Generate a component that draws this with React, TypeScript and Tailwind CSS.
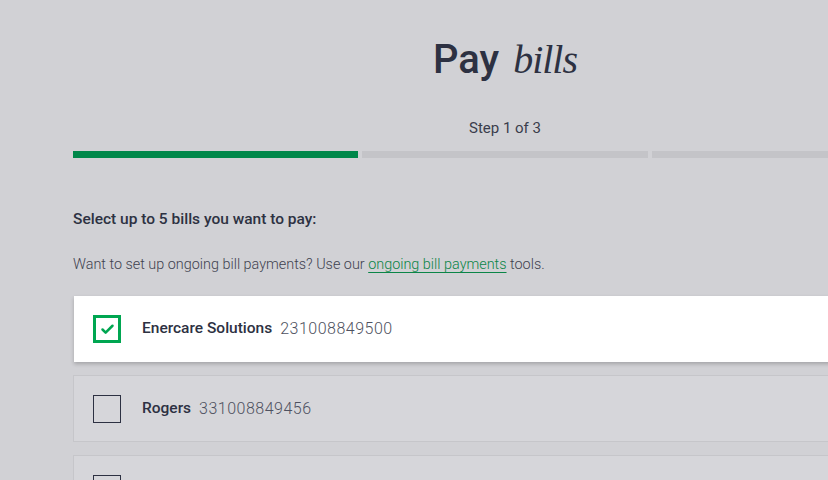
import { Check } from 'lucide-react'

interface Bill {
  name: string
  number: string
  checked?: boolean
}

const bills: Bill[] = [
  { name: 'Enercare Solutions', number: '231008849500', checked: true },
  { name: 'Rogers', number: '331008849456' },
  // third row only peeks in at the bottom edge
  { name: '', number: '' },
]

const sans = "font-['Roboto','Liberation_Sans',sans-serif]"

function BillRow({ bill }: { bill: Bill }) {
  return (
    <div
      className={
        bill.checked
          ? 'h-[66px] flex items-center pl-[19px] bg-white shadow-[0_2px_4px_rgba(0,0,0,0.22)] ml-px'
          : 'h-[67px] flex items-center pl-[19px] bg-[#d6d6da] border border-[#c6c6ca]'
      }
    >
      {bill.checked ? (
        <div className="w-[28px] h-[28px] border-[3px] border-[#00a651] flex items-center justify-center">
          <Check size={15} strokeWidth={4} className="text-[#00a651]" />
        </div>
      ) : (
        <div className="w-[28px] h-[28px] border border-[#2d3142]" />
      )}
      {bill.name && (
        <>
          <span className="ml-[21px] text-[15.5px] font-medium text-[#2d3142]">{bill.name}</span>
          <span className="ml-[8px] text-[16px] font-light text-[#4e5160] tracking-[0.5px]">{bill.number}</span>
        </>
      )}
    </div>
  )
}

export default function App() {
  return (
    <div className={`w-full h-[480px] overflow-hidden bg-[#d1d1d5] ${sans}`}>
      <div className="ml-[73px] w-[864px]">
        <h1 className="pt-[40px] h-[98px] flex justify-center items-baseline gap-[14px] text-[#2d3142] leading-none">
          <span className="text-[40px] font-medium">Pay</span>
          <span className="text-[40px] italic tracking-[-1px] font-['Liberation_Serif',serif]">bills</span>
        </h1>
        <p className="text-center text-[15px] text-[#3a3d4c] leading-[20px] mt-[20px]">Step 1 of 3</p>

        {/* progress */}
        <div className="mt-[13px] flex gap-[4px]">
          <div className="flex-1 h-[7px] bg-[#00874a]" />
          <div className="flex-1 h-[7px] bg-[#c4c4c8]" />
          <div className="flex-1 h-[7px] bg-[#c4c4c8]" />
        </div>

        <p className="mt-[51px] text-[15.5px] font-medium text-[#2d3142] leading-[20px]">
          Select up to 5 bills you want to pay:
        </p>
        <p className="mt-[26px] text-[14.4px] font-light text-[#3f4250] leading-[20px]">
          Want to set up ongoing bill payments? Use our{' '}
          <a href="#" className="text-[#0a8547] underline underline-offset-[3px]">
            ongoing bill payments
          </a>{' '}
          tools.
        </p>

        <div className="mt-[21px] flex flex-col gap-[13px]">
          {bills.map((b, i) => (
            <BillRow key={i} bill={b} />
          ))}
        </div>
      </div>
    </div>
  )
}
